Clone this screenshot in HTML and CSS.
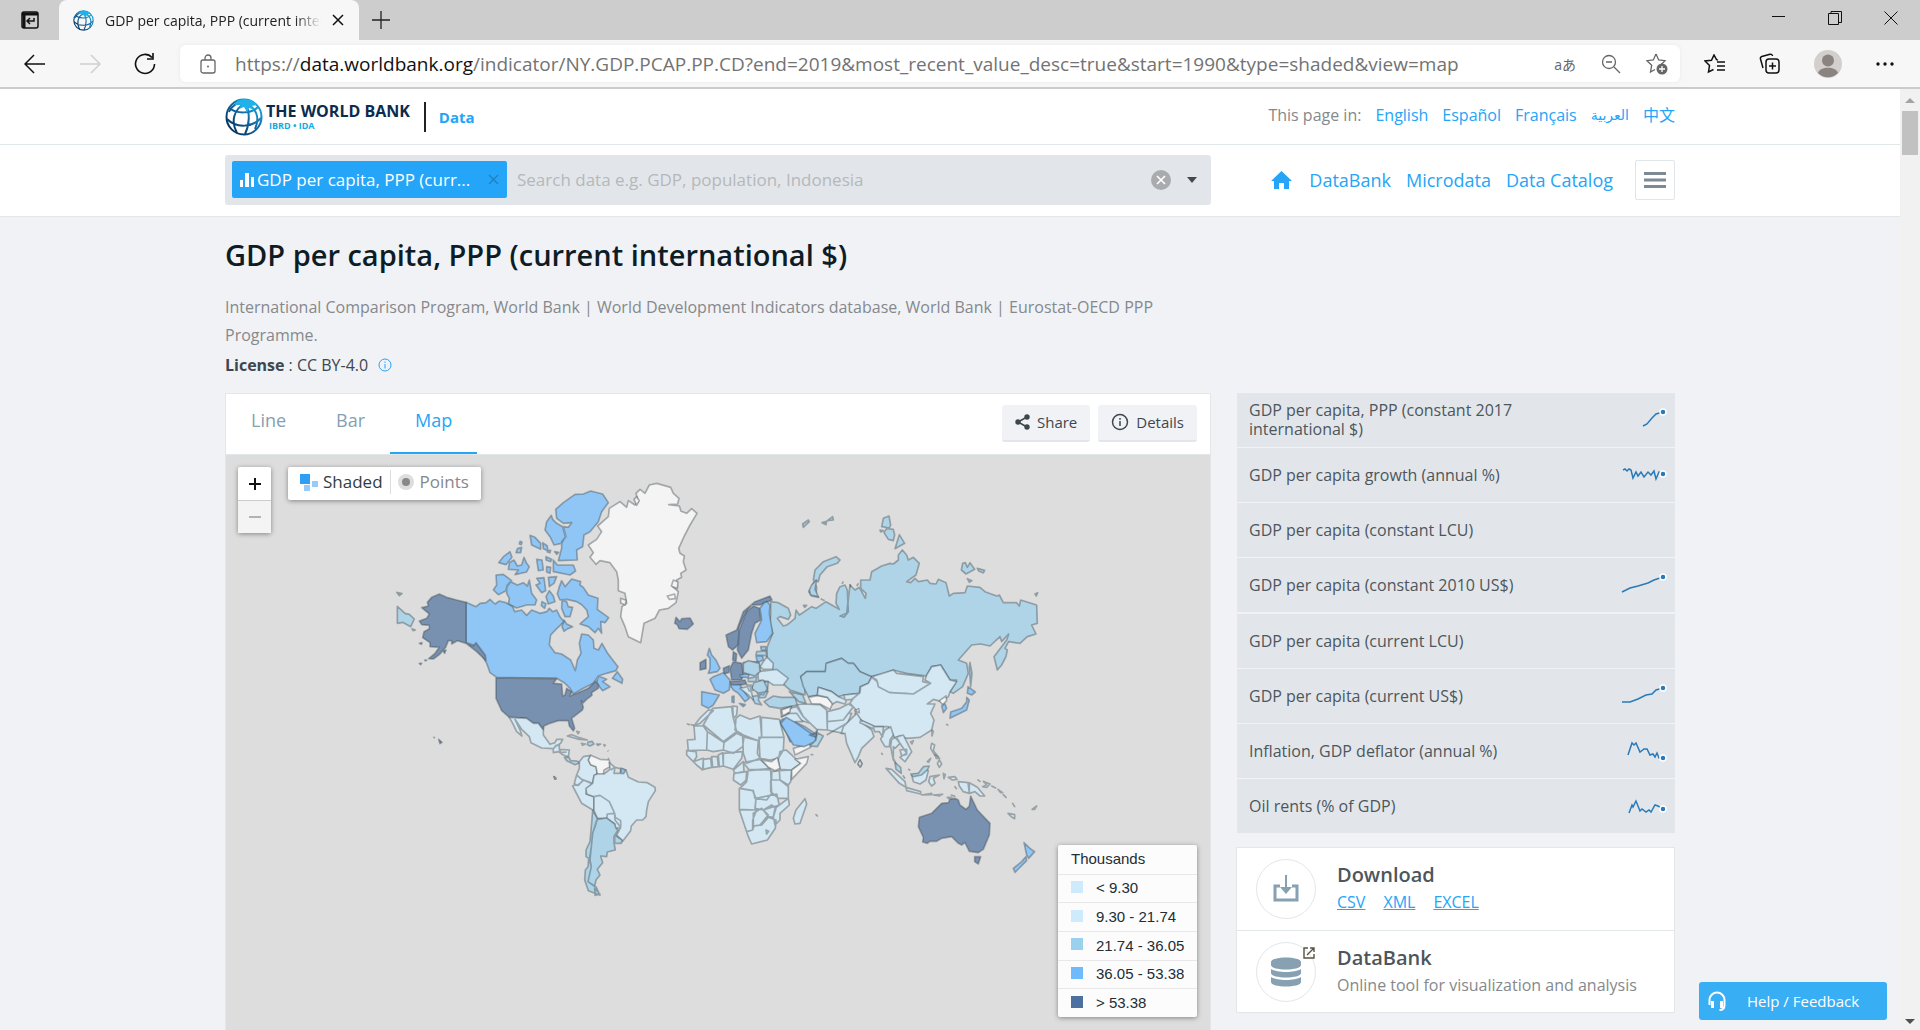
FILE: index.html
```html
<!DOCTYPE html>
<html lang="en">
<head>
<meta charset="utf-8">
<title>GDP per capita, PPP (current international $) | Data</title>
<link rel="stylesheet" href="styles.css">
</head>
<body>
<svg class="defs" aria-hidden="true">
  <defs>
    <linearGradient id="globeTone" x1="0" y1="1" x2="1" y2="0">
      <stop offset="0" stop-color="#002244"/><stop offset=".5" stop-color="#11629b"/><stop offset="1" stop-color="#18b6ee"/>
    </linearGradient>
    <symbol id="globe" viewBox="0 0 38 38">
      <g fill="none" stroke="url(#globeTone)" stroke-width="2">
        <circle cx="19" cy="19" r="17.500"/>
        <path d="M4 10C12 16 26 16 33 9M2 21C12 31 28 29 36 20M20 5C8 12 6 24 12 35M20 5C26 14 24 28 20 36M20 5C32 10 35 20 30 31M20 5C12 3 6 9 4 14"/>
      </g>
      <path d="M12 3C18 0 28 1 32 7L26 8 30 12 24 10 22 14 19 9 14 11 16 7 10 7Z" fill="#1fb1ea"/>
    </symbol>
  </defs>
</svg>

<header class="browser">
  <div class="tabstrip">
    <button class="strip-btn tabs-btn" aria-label="Tab actions"><svg width="20" height="20" viewBox="0 0 20 20" fill="none" stroke="#111" stroke-width="1.500"><rect x="2" y="2" width="16" height="16" rx="2"/><path d="M2 4h16M4 4v14" stroke-width="3"/><path d="M14 8v3H8m2-3-3 3 3 3"/></svg></button>
    <div class="tab">
      <svg width="21" height="21"><use href="#globe"/></svg>
      <span class="tab-title">GDP per capita, PPP (current international $)</span>
      <button class="strip-btn" aria-label="Close tab"><svg width="12" height="12" viewBox="0 0 12 12" stroke="#111" stroke-width="1.500"><path d="M1 1l10 10M11 1 1 11"/></svg></button>
    </div>
    <button class="strip-btn newtab" aria-label="New tab"><svg width="18" height="18" viewBox="0 0 18 18" stroke="#222" stroke-width="1.300"><path d="M9 0v18M0 9h18"/></svg></button>
    <div class="window-btns">
      <button class="strip-btn" aria-label="Minimize"><svg width="14" height="14" viewBox="0 0 14 14" stroke="#111"><path d="M0 5.500h13"/></svg></button>
      <button class="strip-btn" aria-label="Restore"><svg width="14" height="14" viewBox="0 0 14 14" fill="none" stroke="#111"><path d="M.5 2.500h10v11H.5zM3 2.500v-2h10.500v11H11"/></svg></button>
      <button class="strip-btn" aria-label="Close"><svg width="14" height="14" viewBox="0 0 14 14" stroke="#111"><path d="M.5.500l13 13M13.500.500l-13 13"/></svg></button>
    </div>
  </div>
  <div class="toolbar">
    <div class="nav-btns">
      <button class="strip-btn" aria-label="Back"><svg width="22" height="20" viewBox="0 0 22 20" fill="none" stroke="#111" stroke-width="1.500"><path d="M21 10H2M10 1 1 10l9 9"/></svg></button>
      <button class="strip-btn" aria-label="Forward"><svg width="22" height="20" viewBox="0 0 22 20" fill="none" stroke="#cfcfcf" stroke-width="1.500"><path d="M1 10h19M12 1l9 9-9 9"/></svg></button>
      <button class="strip-btn" aria-label="Refresh"><svg width="22" height="22" viewBox="0 0 22 22" fill="none" stroke="#111" stroke-width="1.600"><path d="M20.500 11A9.500 9.500 0 1 1 18 4.500M19 0v6h-6"/></svg></button>
    </div>
    <div class="address">
      <svg width="16" height="20" viewBox="0 0 16 20" fill="none" stroke="#666" stroke-width="1.300"><rect x="1" y="6" width="14" height="13" rx="2"/><path d="M5 6V4a3 3 0 0 1 6 0v2"/><circle cx="8" cy="12.500" r="1" fill="#666" stroke="none"/></svg>
      <div class="url">https://<b>data.worldbank.org</b>/indicator/NY.GDP.PCAP.PP.CD?end=2019&amp;most_recent_value_desc=true&amp;start=1990&amp;type=shaded&amp;view=map</div>
      <div class="address-tools">
        <button class="strip-btn translate" aria-label="Translate">aあ</button>
        <button class="strip-btn" aria-label="Zoom"><svg width="20" height="20" viewBox="0 0 20 20" fill="none" stroke="#666" stroke-width="1.300"><circle cx="8" cy="8" r="6.500"/><path d="M5 8h6M13 13l6 6"/></svg></button>
        <button class="strip-btn" aria-label="Add to favorites"><svg width="22" height="22" viewBox="0 0 22 22"><path d="M10 1l2.700 6 6.300.7-4.600 4.500M10 1 7.300 7 1 7.700l4.700 4.500L4.500 19l4.500-2.500" fill="none" stroke="#666" stroke-width="1.300"/><circle cx="16" cy="16" r="5.500" fill="#666"/><path d="M16 13v6M13 16h6" stroke="#fff" stroke-width="1.300"/></svg></button>
      </div>
    </div>
    <div class="side-tools">
      <button class="strip-btn" aria-label="Favorites"><svg width="21" height="20" viewBox="0 0 21 20" fill="none" stroke="#111" stroke-width="1.500"><path d="M14 6l-1.500-.3L10 1 7.500 6.300 1 7l4.500 4.500L4.500 18l5-2.500M13 8h8M13 12h8M13 16h8"/></svg></button>
      <button class="strip-btn" aria-label="Collections"><svg width="21" height="21" viewBox="0 0 21 21" fill="none" stroke="#111" stroke-width="1.500"><rect x="7" y="6" width="13" height="14" rx="3"/><path d="M13.500 9.500v7M10 13h7M4 15 1.500 6a2 2 0 0 1 1.300-2.500L11 1.200A2 2 0 0 1 13.500 3"/></svg></button>
      <button class="strip-btn" aria-label="Profile"><svg width="28" height="28" viewBox="0 0 28 28"><circle cx="14" cy="14" r="14" fill="#d2cfcc"/><circle cx="14" cy="10.500" r="6" fill="#8a8380"/><path d="M4 23c2-7 18-7 20 0a14 14 0 0 1-20 0z" fill="#8a8380"/></svg></button>
      <button class="strip-btn" aria-label="Settings and more"><svg width="18" height="4" viewBox="0 0 18 4" fill="#111"><circle cx="2" cy="2" r="1.700"/><circle cx="9" cy="2" r="1.700"/><circle cx="16" cy="2" r="1.700"/></svg></button>
    </div>
  </div>
</header>

<div class="viewport">
<div class="page">
  <div class="brand-bar">
    <div class="wrap brand-row">
      <a class="logo" href="#" aria-label="The World Bank home">
        <svg width="38" height="38"><use href="#globe"/></svg>
        <span class="logo-text"><strong>THE WORLD BANK</strong><small>IBRD • IDA</small></span>
      </a>
      <a class="logo-data" href="#">Data</a>
      <nav class="langs" aria-label="Languages"><span>This page in:</span><a href="#">English</a><a href="#">Español</a><a href="#">Français</a><a href="#" class="arabic" lang="ar">العربية</a><a href="#" lang="zh">中文</a></nav>
    </div>
  </div>

  <div class="search-bar">
    <div class="wrap search-row">
      <div class="search">
        <div class="chip">
          <svg width="14" height="14" viewBox="0 0 14 14" fill="#fff"><path d="M0 7h3v7H0zM5 0h4v14H5zM11 4h3v10h-3z"/></svg>
          <span>GDP per capita, PPP (curr...</span>
          <button class="chip-x" aria-label="Remove"><svg width="11" height="11" viewBox="0 0 11 11" stroke="#1b82c6" stroke-width="1.300"><path d="M1 1l9 9M10 1l-9 9"/></svg></button>
        </div>
        <input class="search-input" type="text" aria-label="Search data" placeholder="Search data e.g. GDP, population, Indonesia">
        <button class="plain" aria-label="Clear search"><svg width="20" height="20" viewBox="0 0 20 20"><circle cx="10" cy="10" r="10" fill="#a9abae"/><path d="M6 6l8 8M14 6l-8 8" stroke="#fff" stroke-width="1.700"/></svg></button>
        <button class="plain" aria-label="Open suggestions"><svg width="10" height="6" viewBox="0 0 10 6" fill="#404a50"><path d="M0 0h10L5 6z"/></svg></button>
      </div>
      <nav class="main-nav" aria-label="Main">
        <a href="#" aria-label="Home"><svg width="21" height="18" viewBox="0 0 21 18" fill="#24a5f7"><path d="M10.500 0 21 10h-3v8h-5v-6H8v6H3v-8H0z"/></svg></a>
        <a href="#">DataBank</a><a href="#">Microdata</a><a href="#">Data Catalog</a>
        <button class="menu-btn" aria-label="Menu"><svg width="22" height="16" viewBox="0 0 22 16" stroke="#7e8a93" stroke-width="3"><path d="M0 1.500h22M0 8h22M0 14.500h22"/></svg></button>
      </nav>
    </div>
  </div>

  <main class="wrap columns">
    <section class="primary">
      <h1>GDP per capita, PPP (current international $)</h1>
      <p class="source">International Comparison Program, World Bank | World Development Indicators database, World Bank | Eurostat-OECD PPP Programme.</p>
      <p class="license"><strong>License</strong> : CC BY-4.0 <svg width="14" height="14" viewBox="0 0 14 14" fill="none" stroke="#24a5f7"><circle cx="7" cy="7" r="6"/><path d="M7 6v4.500M7 3.500v1.300"/></svg></p>

      <div class="chart-card">
        <div class="chart-head">
          <div class="tabs" role="tablist">
            <button role="tab">Line</button><button role="tab">Bar</button><button role="tab" aria-selected="true">Map</button>
          </div>
          <div class="actions">
            <button class="action"><svg width="15" height="16" viewBox="0 0 15 16" fill="#3d474d"><circle cx="3" cy="8" r="2.700"/><circle cx="12" cy="3" r="2.700"/><circle cx="12" cy="13" r="2.700"/><path d="M12 3 3 8l9 5" fill="none" stroke="#3d474d" stroke-width="1.600"/></svg>Share</button>
            <button class="action"><svg width="18" height="18" viewBox="0 0 18 18" fill="none" stroke="#3d474d" stroke-width="1.500"><circle cx="9" cy="9" r="7.500"/><path d="M9 8v5M9 5v1.700"/></svg>Details</button>
          </div>
        </div>
        <div class="map">
          <svg class="world" width="984" height="575" viewBox="226 455 984 575" role="img" aria-label="World map of GDP per capita">
            <g transform="translate(380 470) scale(.33333)">
              <path class="nd" d="M808 45L830 40 872 52 880 70 897 85 893 102 866 104 898 108 903 124 920 130 935 116 951 130 930 165 912 200 896 235 900 250 913 258 910 275 918 300 902 310 905 322 890 330 892 352 878 350 895 365 888 398 865 415 838 420 825 445 792 460 782 518 745 500 735 470 722 440 726 410 740 400 735 370 715 362 715 330 710 305 690 278 660 272 648 283 630 262 640 248 625 225 650 208 665 185 653 168 685 140 688 115 720 95 740 112 745 92 765 105 775 95 768 70 780 58 795 70Z"/>
              <path class="nd" d="M762 88l8-8 8 12-8 14zM880 330l14 6-2 20-18-8zM862 378l22-6 2 14-18 2zM722 385l16 6-2 14-14-6z"/>
              <path class="c3" d="M585 73L610 72 632 63 668 72 685 98 665 125 655 155 630 185 612 195 608 230 590 240 592 270 535 272 545 235 545 215 558 200 550 170 565 172 575 158 550 160 530 145 527 118 550 98ZM514 136L518 148 530 160 548 170 556 200 545 220 522 225 510 200 495 180 500 155ZM450 196L465 202 482 220 482 238 455 225ZM488 218L502 228 503 242 490 236ZM412 236L425 232 422 248 408 248ZM420 214l6 2-2 8-6-2zM390 245L396 262 378 284 356 278 370 260ZM402 270L412 288 425 285 432 262 440 280 448 290 440 306 405 314 415 300 385 298 388 278ZM470 268L486 270 490 300 475 302ZM498 260L515 268 512 275 498 270ZM520 270L532 285 580 285 587 303 570 315 520 305ZM500 290L512 292 510 310 500 306ZM502 240l10 1-2 7-8-2zM524 245l12 2-6 6zM348 315L370 313 395 332 382 345 378 362 355 374 340 360 350 345ZM392 335L412 345 430 338 442 348 448 330 452 352 455 370 470 390 465 405 440 405 410 414 385 402 388 385 380 370 380 352ZM470 325L492 323 495 345 497 362 485 368 468 345 480 340ZM505 322L530 320 522 340 508 350ZM508 362L520 378 525 395 505 402 498 380ZM545 332L538 350 532 372 540 390 560 388 590 395 606 405 620 420 625 440 600 462 625 470 645 488 655 475 665 490 662 455 675 458 686 443 652 418 654 385 625 375 610 352 600 345 602 335 575 327 555 350ZM486 395l12 6-4 14-10-8zM546 390L560 395 565 410 578 412 570 440 555 440 545 415ZM552 450L560 462 578 470 560 478 552 484 546 470Z"/>
              <path class="c3" d="M258 397L288 410 300 400 318 398 330 388 345 402 358 393 378 398 398 410 404 425 425 420 440 436 455 420 480 430 500 425 508 415 518 425 530 420 540 440 552 455 528 478 512 495 508 525 525 548 545 552 572 570 586 602 592 570 603 550 598 520 605 492 625 495 640 510 642 535 655 540 666 520 683 550 700 572 714 590 708 602 680 610 655 618 640 640 610 655 580 672 570 655 555 640 530 625 350 622 330 608 320 580 295 535 280 525 258 518ZM655 618L680 628 668 635 690 650 668 662 650 640ZM697 625L712 605 728 628 726 640Z"/>
              <path class="c4" d="M258 397L230 390 200 382 178 372 155 382 142 397 145 408 125 413 148 432 140 445 118 453 125 464 148 466 148 476 132 485 128 503 150 518 150 530 178 532 165 550 146 566 160 567 180 552 197 532 205 512 215 512 215 522 232 512 258 520 280 528 288 518 316 556 318 572 290 545 258 520ZM188 542l10-2-4 10zM118 520l8-2-2 5zM118 580l7 0-3 4zM134 570l6 0-3 3z"/>
              <path class="c2" d="M52 409L75 430 88 433 103 447 92 470 68 457 52 460ZM50 367l16 4-8 6zM96 476l10 4-6 2z"/>
              <path class="c4" d="M888 442L900 455 905 446 930 444 940 462 922 478 897 476 892 464 884 460Z"/>
            </g>
            <g transform="translate(420 660) scale(.33333)">
              <path class="c4" d="M228 54L410 56 400 70 425 72 428 108 435 105 440 85 455 95 450 108 475 98 505 85 527 64 536 75 535 85 515 98 516 106 500 118 488 130 484 122 490 142 487 150 455 175 464 205 460 213 448 198 445 182 415 182 390 190 372 198 370 210 355 190 340 190 320 175 268 172 245 152 228 115ZM56 238l10 9-6 4z"/>
              <path class="c0" d="M268 172L320 175 340 190 355 190 370 210 370 225 390 253 405 248 410 238 428 238 422 250 408 258 400 266 365 264 333 248 328 230 305 208 285 178 300 210 306 228 290 215 278 190ZM400 266L408 256 418 256 418 268 448 270 445 290 430 285 415 275 400 278ZM418 268l4 10 18-2"/>
              <path class="c2" d="M433 292L447 292 452 302 470 303 480 308 465 314 440 302ZM502 254l2-8 12-2 6 8-12 6zM530 252h12l-8 4z"/>
              <path class="c0" d="M442 228L455 224 475 232 502 240 478 238ZM470 214l8 2-4 5zM484 250l12 2-8 4zM552 254l4 2-3 2zM40 231l5 3M402 350l6 7-4 0zM563 272l2 2M563 295l4 2"/>
            </g>
            <g transform="translate(520 720) scale(.33333)">
              <path class="c0" d="M178 125L190 110 212 106 205 120 212 134 228 140 232 160 222 168 218 190 185 178 170 165 178 145ZM170 165L185 178 190 182 172 196 163 190ZM163 195L175 196 190 180 218 192 200 205 198 222 222 230 222 272 185 250 158 198Z"/>
              <path class="nd" d="M212 106L205 120 212 134 228 140 232 162 250 164 252 150 270 140 268 120 240 118Z"/>
              <path class="c0" d="M268 128L285 142 318 150 325 172 355 186 382 188 405 202 406 212 385 245 380 270 378 290 368 300 350 300 334 318 332 332 308 364 290 345 302 322 285 300 284 280 268 245 240 226 222 230 200 222 198 205 218 190 222 166 232 162 252 162 270 148ZM222 230L240 226 268 245 284 280 262 282 260 295 232 295 222 272ZM260 295L262 282 284 280 286 292 302 302 302 322 285 326 284 312ZM272 150L285 142 282 160 300 160 303 145"/>
              <path class="c3" d="M303 144l14 6-6 11-8-1z"/>
              <path class="c2" d="M218 272L232 295 218 340 214 380 210 420 214 440 204 485 228 500 240 526 205 512 194 480 196 450 204 440 206 415 198 410 198 390 210 365 214 320ZM232 298L260 294 284 312 288 325 294 330 282 350 282 368 286 390 262 396 260 410 242 408 248 428 232 448 240 465 228 480 224 500 204 485 214 440 208 420 214 380 218 340 226 318ZM284 345L306 360 304 370 284 370ZM224 505L240 522 225 526Z"/>
              <path class="c0" d="M102 170l6 4-2 3z"/>
            </g>
            <g transform="translate(740 500) scale(.33333)">
              <path class="c2" d="M92 305L115 308 145 325 152 345 145 358 120 350 112 355 130 378 140 375 150 368 165 355 168 330 178 345 215 320 228 325 258 305 298 328 288 310 290 280 300 260 315 255 322 270 325 335 312 352 300 348 320 340 330 255 345 270 358 262 376 295 378 280 362 265 362 240 390 240 395 215 425 198 450 190 460 192 475 180 475 165 487 150 500 165 505 180 520 172 538 190 528 225 500 245 512 248 525 235 535 245 562 240 570 250 588 252 595 238 618 248 628 288 640 280 675 278 682 258 720 262 735 275 770 288 778 285 790 308 830 308 838 318 842 300 890 315 892 370 875 375 888 402 862 410 840 430 806 425 795 445 802 450 798 470 785 495 772 510 762 470 800 420 806 402 785 425 780 410 750 438 722 432 695 435 655 480 680 490 685 520 668 560 640 580 630 575 650 540 630 540 602 495 575 500 560 528 500 520 460 510 430 522 395 530 360 515 340 490 325 490 305 475 260 490 256 515 200 515 182 530 195 560 195 585 150 570 110 535 100 510 80 490 82 440 98 400 90 370 92 340Z"/>
              <path class="c2" d="M288 170L300 180 292 190 262 200 240 225 235 245 220 240 225 210 250 185ZM222 245L230 262 228 285 236 292 215 288 206 275 215 262ZM188 72L205 60 208 65 190 82ZM246 68l14-4-2 10zM262 62l16-12 2 10zM430 55L447 48 452 75 448 84 425 80ZM440 85L460 88 464 105 460 122 445 118 432 98ZM478 104L494 130 465 146ZM668 190L676 188 682 202 690 188 704 208 678 222 664 210ZM712 205l22 6-4 8-14-6zM682 236l14 6-8 5zM885 282l8-4-4 10zM190 316l10 0-6 6zM242 296l12 6M690 487L696 520 692 560 688 500ZM306 252l4-8M332 262l-2-10M350 258l6-8M420 90l10 2-8 4z"/>
              <path class="c2" d="M182 530L200 515 256 515 258 490 305 475 325 490 340 490 360 515 395 530 385 550 360 560 358 580 312 585 295 590 275 575 235 562 232 585 205 590 190 560ZM72 605L100 588 125 592 165 592 172 615 120 625 88 620Z"/>
              <path class="nd" d="M206 592L232 587 262 592 278 610 270 628 240 612 215 612Z"/>
              <path class="c0" d="M232 585L235 562 275 575 295 590 320 600 315 612 290 605 278 612 262 592ZM312 585L358 580 335 598 315 600ZM395 530L460 510 470 520 550 530 548 545 572 550 520 582 498 580 450 578 415 560 410 540ZM395 532L412 545 415 560 450 578 520 582 572 550 555 540 560 525 575 500 602 495 630 540 650 545 630 575 625 590 605 605 580 598 562 612 585 612 572 640 582 660 575 690 540 712 500 715 480 708 465 715 445 680 405 680 360 660 345 640 350 632 330 610 340 595 360 578 362 560 385 550ZM172 615L185 612 240 614 260 630 262 690 230 688 190 650ZM148 625L170 620 190 650 210 670 180 660 145 640ZM262 635L300 625 325 612 340 620 310 660 262 665ZM262 665L310 660 325 640 335 640 310 700 262 690ZM54 515L110 508 145 535 130 555 100 555 85 545 55 540ZM60 500L80 470 100 490 98 508 70 508Z"/>
              <path class="nd" d="M122 630L155 620 140 645 125 650ZM598 602l20-14 2 14-12 12zM344 632l12-6 2 12z"/>
              <path class="c3" d="M118 665L135 652 195 680 225 700 220 715 150 725 140 700ZM605 618L615 612 620 625 610 638ZM684 560L706 576 695 585 682 580ZM680 592L688 600 680 630 630 655 632 636 665 625 680 605ZM62 440L78 440 78 452 64 450ZM48 468L68 468 70 480 52 488Z"/>
              <path class="c2" d="M50 455l28-2 2 14-32-2zM10 488L55 485 60 510 45 525 12 518ZM50 548L85 545 82 575 55 578 40 560ZM148 575l40 10 10 25-22-5z"/>
            </g>
            <g transform="translate(680 580) scale(.33333)">
              <path class="c4" d="M270 48L276 60 255 68 240 75 215 75 200 95 178 140 175 195 158 210 145 200 138 165 170 150 190 95 225 65ZM220 78L238 85 242 120 225 130 215 160 205 210 185 235 172 210 178 150 200 95ZM150 265L160 245 185 250 190 285 185 300 155 300ZM160 215L170 222 168 245 158 240ZM60 248l18-10 0 28-18 4zM150 305l45-5 5 12-45 8zM130 265l18-8 0 20-16 5z"/>
              <path class="c3" d="M262 65L270 75 268 100 278 160 260 185 230 188 225 160 245 120 240 85 252 68ZM88 205L95 225 108 240 120 265 112 275 85 280 90 265 90 235 82 225ZM100 290L130 278 150 300 148 330 130 340 105 330 90 298ZM65 335L118 345 100 375 85 385 65 375ZM150 315L180 315 200 345 208 355 195 365 175 340 160 330ZM178 370l18 4-6 6zM156 350l6-2 0 20-6-2zM180 285l28-4-4 12-22-2z"/>
              <path class="c2" d="M190 250L205 242 238 250 240 275 225 288 190 278ZM222 308L250 300 262 325 250 345 235 340 215 325ZM205 295L230 290 228 305 205 305ZM215 350L240 345 235 360 245 375 225 370ZM395 15L410 0 405 28 415 50 392 45 388 30ZM232 340l32-6-8 18-20 2z"/>
              <path class="c0" d="M180 325L210 318 220 360 205 345ZM200 315l14 0 4 16-10 2z"/>
              <path class="c0" d="M85 390L100 392 60 430 42 437 62 412ZM98 385L155 380 158 405 170 455 130 485 70 435ZM158 378L172 380 170 405 160 415ZM168 415L180 405 210 418 240 408 245 470 235 482 190 465 165 450ZM244 412L298 418 312 472 245 472ZM42 438L70 438 82 455 80 510 25 512 22 480 45 478ZM82 455L132 488 130 510 100 515 80 510ZM132 488L170 460 192 470 188 500 160 520 130 510ZM188 470L235 482 232 520 240 535 200 550 190 520ZM237 472L312 472 310 510 295 535 270 540 240 535ZM20 512L48 515 50 530 40 545 20 525ZM40 545L70 535 68 570 50 555ZM70 538L92 535 95 562 70 568ZM95 530L112 530 115 560 98 562ZM115 525L128 518 130 558 118 560ZM130 520L188 515 185 535 160 568 130 558ZM160 570L190 545 192 575 165 580ZM190 548L240 538 270 565 210 572ZM162 580L200 575 198 600 182 615 160 600ZM205 568L272 570 275 640 260 660 225 655 220 632 180 625 200 605ZM178 625L218 632 228 655 225 690 178 688ZM228 655L290 642 298 675 250 690 225 685ZM272 600L300 600 325 620 325 655 295 655 272 635ZM275 575L298 572 300 600 275 600ZM298 572L335 570 332 605 325 615 300 600ZM300 515L318 510 335 525 362 550 335 570 300 568 295 540ZM325 655L328 675 300 700 300 720 285 735 280 710 285 685ZM178 690L230 690 218 720 218 750 200 755ZM220 700L245 685 265 705 240 735 220 738ZM250 690L275 675 288 685 280 712 265 710ZM200 755L218 750 222 738 245 735 265 712 288 720 286 745 262 780 215 792 205 770ZM375 656L380 672 360 730 345 732 340 715 348 690Z"/>
              <path class="c0" d="M302 412L330 400 350 400 368 425 345 425M440 465L500 430M484 460L495 460 500 490 525 548 535 530 545 505 582 470 575 450 550 430 530 400 490 440ZM540 540l6 10-4 10-8-6zM258 750l8 4-6 8zM22 432l6 2zM34 434l6 2zM408 704l4 4zM394 524l4 0z"/>
              <path class="nd" d="M245 540L275 545 292 532 300 565 285 572 265 562ZM340 505L390 490 392 502 345 525ZM335 570L362 550 345 538 385 530 380 550 335 598ZM305 390L332 380 330 395 308 408Z"/>
              <path class="c3" d="M302 430L318 412 350 430 378 450 395 462 410 465 405 485 372 500 340 495Z"/>
              <path class="c4" d="M388 465L405 460 412 450 408 472Z"/>
              <path class="c2" d="M412 458L430 468 412 500 390 498 408 480Z"/>
            </g>
            <g transform="translate(840 680) scale(.33333)">
              <path class="c4" d="M392 348L412 390 450 430 448 465 430 508 415 518 388 514 375 488 365 495 355 490 335 470 305 475 290 484 270 484 262 490 248 486 250 472 235 440 238 412 275 400 305 370 325 368 330 358 345 355 355 360 360 375 378 388 388 378ZM404 530L422 530 415 552 404 545Z"/>
              <path class="c3" d="M552 488L570 505 584 515 566 535 560 525ZM558 530L560 542 525 577 520 565 545 545Z"/>
              <path class="c0" d="M138 265L155 268 195 305 198 322 178 310ZM198 322L242 335 242 342 200 332ZM215 285L240 280 255 268 265 272 258 300 240 312 220 305ZM270 290L298 285 280 295 285 310 275 318 266 305ZM355 305L384 308 388 340 370 335 358 318ZM388 308L412 322 434 348 420 348 405 335 388 340ZM325 292l20-2 6 8-14 2zM275 190L284 195 280 212 295 230 284 225 272 205ZM298 240L305 252 298 262 292 250ZM60 240L66 252 60 262 54 250ZM276 150l4 4-4 14zM212 186l8-4-4 10z"/>
              <path class="c2" d="M165 248L182 262 184 280 168 268ZM212 282L235 280 250 260 268 258 262 270 245 285 220 290Z"/>
              <path class="c0" d="M152 140L160 165 150 180 148 200 135 200 122 178 135 150ZM155 178L170 172 180 190 165 205 160 200 160 235 168 250 160 240 152 200ZM165 172L190 165 200 185 215 215 195 245 180 232 200 220 180 190ZM180 210l20-2 0 15-15 4zM100 140l30 0 -2 30-10-15-14 0zM62 120l40 18-2 8-40-18zM310 280l6 4-4 12zM245 345l30-5 0 4zM280 345l28-2-10 5zM322 352l14 0-10 4zM262 245l10-10-6 12zM285 225l14 10-10 0zM430 304l20 8-10 10-12-2 12-6zM455 318l12 6zM474 328l14 10-6 0zM490 344l8 8zM518 370l6 10zM504 400l20 4 0 12-10-6zM576 388l14-10-6 10zM190 288l4 6zM345 320l4 6zM414 300l6 4zM334 345l10 4zM206 268l3 2zM320 133l3 2zM125 220l2 3z"/>
            </g>
          </svg>
          <div class="zoom-ctl"><button aria-label="Zoom in"><svg width="14" height="14" viewBox="0 0 14 14" stroke="#111" stroke-width="2"><path d="M7 1v12M1 7h12"/></svg></button><button aria-label="Zoom out"><svg width="14" height="14" viewBox="0 0 14 14" stroke="#b3b3b3" stroke-width="2"><path d="M1 7h12"/></svg></button></div>
          <div class="mode-ctl">
            <button class="on"><svg width="18" height="17" viewBox="0 0 18 17"><path d="M0 0h10v10H0z" fill="#2e9ff5"/><path d="M12 7h6v6h-6zM4 11h6v6H4z" fill="#97cbfa"/></svg>Shaded</button>
            <button><svg width="18" height="18" viewBox="0 0 18 18"><circle cx="9" cy="9" r="8" fill="#ddd"/><circle cx="9" cy="9" r="4" fill="#888"/></svg>Points</button>
          </div>
          <div class="legend">
            <div class="legend-row">Thousands</div>
            <div class="legend-row"><i class="k1"></i>&lt; 9.30</div>
            <div class="legend-row"><i class="k2"></i>9.30 - 21.74</div>
            <div class="legend-row"><i class="k3"></i>21.74 - 36.05</div>
            <div class="legend-row"><i class="k4"></i>36.05 - 53.38</div>
            <div class="legend-row"><i class="k5"></i>&gt; 53.38</div>
          </div>
        </div>
      </div>
    </section>

    <aside class="sidebar">
      <ul class="related">
        <li><a href="#"><span>GDP per capita, PPP (constant 2017 international $)</span><svg class="spark" width="50" height="40" viewBox="0 0 50 40"><path d="M25 26L29 24 34 18 38 14 45 12"/><circle cx="45" cy="12" r="3"/></svg></a></li>
        <li><a href="#"><span>GDP per capita growth (annual %)</span><svg class="spark" width="50" height="40" viewBox="0 0 50 40"><path d="M5 15L7 14 9 16 11 14 13 15 15 23 18 17 20 21 23 17 26 22 30 17 33 20 36 16 38 24 41 17 45 19"/><circle cx="45" cy="19" r="3"/></svg></a></li>
        <li><a href="#"><span>GDP per capita (constant LCU)</span></a></li>
        <li><a href="#"><span>GDP per capita (constant 2010 US$)</span><svg class="spark" width="50" height="40" viewBox="0 0 50 40"><path d="M4 27L12 23 20 21 30 18 36 15 45 12"/><circle cx="45" cy="12" r="3"/></svg></a></li>
        <li class="group-start"><a href="#"><span>GDP per capita (current LCU)</span></a></li>
        <li><a href="#"><span>GDP per capita (current US$)</span><svg class="spark" width="50" height="40" viewBox="0 0 50 40"><path d="M4 26L12 26 20 23 28 19 34 18 38 14 45 12"/><circle cx="45" cy="12" r="3"/></svg></a></li>
        <li><a href="#"><span>Inflation, GDP deflator (annual %)</span><svg class="spark" width="50" height="40" viewBox="0 0 50 40"><path d="M10 24L14 12 16 14 18 12 22 21 26 18 29 18 32 24 35 23 37 26 39 22 41 27 45 27"/><circle cx="45" cy="27" r="3"/></svg></a></li>
        <li><a href="#"><span>Oil rents (% of GDP)</span><svg class="spark" width="50" height="40" viewBox="0 0 50 40"><path d="M11 27L14 19 15 21 18 15 22 25 24 23 28 26 31 24 33 26 37 19 40 20 45 23"/><circle cx="45" cy="23" r="3"/></svg></a></li>
      </ul>
      <div class="resources">
        <div class="resource">
          <span class="round"><svg width="26" height="28" viewBox="0 0 26 28" fill="none" stroke="#87a0b2" stroke-width="3"><path d="M7 11H2v14h22V11h-5"/><path d="M13 0v14" stroke-width="2"/><path d="M7 12h12l-6 7z" fill="#87a0b2" stroke="none"/></svg></span>
          <div><h2>Download</h2><p class="formats"><a href="#">CSV</a><a href="#">XML</a><a href="#">EXCEL</a></p></div>
        </div>
        <div class="resource">
          <span class="round"><svg width="30" height="30" viewBox="0 0 30 30" fill="#87a0b2"><path d="M0 5C0-1 30-1 30 5v3c0 6-30 6-30 0zM0 12c6 4 24 4 30 0v4c0 6-30 6-30 0zM0 20c6 4 24 4 30 0v5c0 6-30 6-30 0z"/></svg><svg class="ext" width="12" height="12" viewBox="0 0 12 12" fill="none" stroke="#5b5340" stroke-width="1.400"><path d="M5 1H1v10h10V7M7 1h4v4M11 1 4 8"/></svg></span>
          <div><h2>DataBank</h2><p>Online tool for visualization and analysis</p></div>
        </div>
      </div>
    </aside>
  </main>
</div>
<div class="scrollbar" aria-hidden="true"><svg width="10" height="5" viewBox="0 0 10 5" fill="#a3a3a3"><path d="M0 5h10L5 0z"/></svg><div class="thumb"></div><svg class="down" width="10" height="5" viewBox="0 0 10 5" fill="#505050"><path d="M0 0h10L5 5z"/></svg></div>
<button class="help"><svg width="18" height="20" viewBox="0 0 18 20" fill="none" stroke="#fff" stroke-width="2"><path d="M1.500 14V9a7.500 7.500 0 0 1 15 0v5c0 3-2 5-5 5"/><path d="M4.500 10v7M13.500 10v7" stroke-width="3"/></svg><span>Help / Feedback</span></button>
</div>
</body>
</html>
```
FILE: styles.css
```css
* { box-sizing: border-box; }
html, body { height: 100%; }
body {
  margin: 0;
  display: flex;
  flex-direction: column;
  overflow: hidden;
  font-family: "Open Sans", "Noto Sans", "Noto Sans CJK SC", sans-serif;
  font-size: 16px;
  color: #3d474d;
  background: #f0f2f6;
}
button { font: inherit; color: inherit; border: 0; background: none; padding: 0; margin: 0; cursor: pointer; }
a { color: #24a5f7; text-decoration: none; }
h1, h2, p, ul { margin: 0; padding: 0; }
svg { display: block; flex: none; }
.defs { position: absolute; width: 0; height: 0; }

/* Browser frame */
.browser { flex: none; border-bottom: 2px solid #cbcbcb; }
.strip-btn { display: flex; align-items: center; justify-content: center; }
.tabstrip { display: flex; align-items: center; height: 40px; background: #cdcdcd; }
.tabs-btn { width: 59px; }
.tab { display: flex; align-items: center; gap: 11px; width: 300px; height: 40px; padding: 0 15px 0 14px; background: #f7f7f7; border-radius: 8px 8px 0 0; }
.tab-title {
  flex: 1; overflow: hidden; white-space: nowrap; font-size: 14px; color: #222;
  -webkit-mask-image: linear-gradient(to right, #000 88%, transparent);
  mask-image: linear-gradient(to right, #000 88%, transparent);
}
.newtab { margin-left: 13px; }
.window-btns { display: flex; gap: 42px; margin-left: auto; padding: 0 22px 4px 0; }
.toolbar { display: flex; align-items: center; height: 47px; padding-right: 26px; background: #f7f7f7; }
.nav-btns { display: flex; gap: 33px; width: 180px; padding-left: 24px; }
.address { flex: 1; display: flex; align-items: center; gap: 19px; height: 37px; padding: 0 12px 0 20px; background: #fff; border-radius: 6px; box-shadow: 0 0 4px #e9e9e9; }
.url { flex: 1; white-space: nowrap; overflow: hidden; font-size: 19px; color: #737373; }
.url b { font-weight: 400; color: #111; }
.address-tools { display: flex; align-items: center; gap: 25px; }
.translate { font-size: 14px; color: #666; }
.side-tools { display: flex; align-items: center; gap: 34px; padding-left: 24px; }

/* Page frame */
.viewport { flex: 1; min-height: 0; display: flex; position: relative; }
.page { flex: 1; min-width: 0; overflow: hidden; }
.scrollbar { width: 20px; display: flex; flex-direction: column; align-items: center; gap: 8px; padding: 9px 0 6px; background: #f1f1f1; }
.thumb { width: 16px; height: 44px; background: #c1c1c1; }
.down { margin-top: auto; }
.wrap { max-width: 1450px; margin: 0 auto; }
.brand-bar, .search-bar { background: #fff; border-bottom: 1px solid #e2e7ea; }

.brand-row { display: flex; align-items: center; height: 55px; }
.logo { display: flex; align-items: center; gap: 3px; padding-right: 14px; color: #0a2c4e; }
.logo-text { display: flex; flex-direction: column; font-family: "Open Sans", sans-serif; }
.logo strong { font-size: 16px; line-height: 18px; font-weight: 700; }
.logo small { padding-left: 3px; font-size: 9px; line-height: 12px; font-weight: 700; color: #10ace3; }
.logo-data { padding: 0 13px; border-left: 2px solid #222; line-height: 30px; font-size: 15px; font-weight: 700; }
.langs { display: flex; gap: 14px; margin-left: auto; padding-bottom: 4px; font-size: 16px; line-height: 22px; color: #86898c; }
.arabic { font-family: "DejaVu Sans", sans-serif; font-size: 14px; }

.search-row { display: flex; align-items: center; justify-content: space-between; height: 71px; padding-bottom: 2px; }
.search { display: flex; align-items: center; gap: 16px; width: 986px; height: 50px; padding: 0 14px 0 7px; background: #e2e6ea; border-radius: 3px; }
.chip { display: flex; align-items: center; width: 275px; height: 37px; padding: 0 8px; gap: 3px; background: #24a5f7; color: #fff; font-size: 17px; border-radius: 2px; white-space: nowrap; }
.chip-x { margin-left: auto; }
.search-input { flex: 1; min-width: 0; border: 0; padding: 0; margin-left: -6px; background: none; font: inherit; font-size: 17px; }
.search-input::placeholder { color: #b5b8bb; }
.main-nav { display: flex; align-items: center; gap: 15px; font-size: 18px; font-weight: 500; }
.main-nav a:first-child { margin-right: 2px; }
.menu-btn { display: flex; align-items: center; justify-content: center; width: 40px; height: 40px; margin-left: 7px; border: 1px solid #dfe5e8; border-radius: 2px; }

/* Main columns */
.columns { display: grid; grid-template-columns: 986px 1fr; column-gap: 25px; }
h1 { padding-top: 18px; font-size: 29px; line-height: 40px; font-weight: 600; color: #0e1c25; }
.source { margin-top: 18px; font-size: 16px; line-height: 28px; color: #86898c; }
.license { display: flex; align-items: center; gap: 4px; margin-top: 2px; font-size: 16px; line-height: 28px; }
.license strong { font-weight: 700; }
.license svg { margin-left: 6px; }

.chart-card { margin-top: 14px; border: 1px solid #e2e7ea; border-bottom: 0; background: #fff; }
.chart-head { display: flex; justify-content: space-between; height: 61px; border-bottom: 1px solid #e2e7ea; }
.tabs { display: flex; font-size: 18px; color: #86a0b0; }
.tabs button { padding: 0 25px 6px; border-bottom: 2px solid transparent; }
.tabs button[aria-selected] { color: #24a5f7; border-color: #24a5f7; font-weight: 500; }
.actions { display: flex; gap: 8px; padding: 11px 13px 12px 0; }
.action { display: flex; align-items: center; gap: 7px; padding: 0 13px 2px; font-size: 15px; background: #f0f2f6; border-bottom: 2px solid #e2e6ea; border-radius: 3px; }

.map { position: relative; height: 575px; overflow: hidden; background: #ddd; }
.world path { stroke: #3c464b; stroke-opacity: .4; stroke-width: 5; stroke-linejoin: round; }
.c0 { fill: #d3e8f3; }
.c2 { fill: #afd4e8; }
.c3 { fill: #8fc6f5; }
.c4 { fill: #7891b1; }
.nd { fill: #f4f4f4; }
.zoom-ctl, .mode-ctl, .legend { position: absolute; background: #fff; border-radius: 2px; box-shadow: 0 1px 5px rgba(0, 0, 0, .4); }
.zoom-ctl { left: 12px; top: 12px; width: 33px; }
.zoom-ctl button { display: flex; align-items: center; justify-content: center; width: 33px; height: 33px; }
.zoom-ctl button + button { background: #f4f4f4; border-top: 1px solid #ccc; }
.mode-ctl { left: 62px; top: 12px; display: flex; align-items: center; height: 33px; padding: 0 12px 3px; font-size: 17px; line-height: 24px; }
.mode-ctl button { display: flex; align-items: center; gap: 5px; color: #86898c; }
.mode-ctl .on { margin-right: 6px; padding-right: 7px; border-right: 1px solid #ddd; color: #333d44; }
.legend { right: 13px; top: 390px; width: 139px; height: 172px; display: grid; grid-auto-rows: 1fr; background: #fcfcfc; font: 15px/24px "Liberation Sans", Arial, sans-serif; color: #222d35; }
.legend-row { display: flex; align-items: center; gap: 13px; padding-left: 13px; }
.legend-row + .legend-row { border-top: 1px solid #e8e8e8; }
.legend i { width: 12px; height: 12px; margin-bottom: 3px; }
.k1, .k2 { background: #cdebfb; }
.k3 { background: #9bd0ee; }
.k4 { background: #6fbafc; }
.k5 { background: #4c70a0; }

/* Sidebar */
.sidebar { padding-top: 176px; }
.related { list-style: none; display: grid; gap: 1px; margin-left: 1px; }
.related a { display: flex; align-items: center; justify-content: space-between; height: 54px; padding: 0 7px 0 12px; background: #e2e6ea; color: #4d565c; font-size: 16px; line-height: 19px; }
.related span { max-width: 300px; }
.group-start { padding-top: 1px; }
.spark path { fill: none; stroke: #2a7ab8; stroke-width: 1.5; }
.spark circle { fill: #2a7ab8; stroke: #fff; stroke-width: 1.5; }
.resources { margin-top: 14px; border: 1px solid #e2e7ea; background: #fff; }
.resource { display: flex; align-items: center; gap: 21px; height: 82px; padding-left: 19px; }
.resource + .resource { border-top: 1px solid #e2e7ea; }
.round { position: relative; display: flex; align-items: center; justify-content: center; width: 60px; height: 60px; border: 1px solid #e2e7ea; border-radius: 50%; }
.ext { position: absolute; right: 0; top: 4px; }
h2 { font-size: 20px; line-height: 26px; font-weight: 600; color: #4d565c; }
.resource p { font-size: 16px; line-height: 28px; color: #86898c; }
.formats { display: flex; gap: 18px; }
.formats a { text-decoration: underline; }
.help { position: absolute; right: 33px; bottom: 10px; display: flex; align-items: center; gap: 21px; width: 188px; height: 38px; padding-left: 9px; background: #38aef5; color: #fff; font-size: 15px; font-weight: 500; border-radius: 3px; }
```
